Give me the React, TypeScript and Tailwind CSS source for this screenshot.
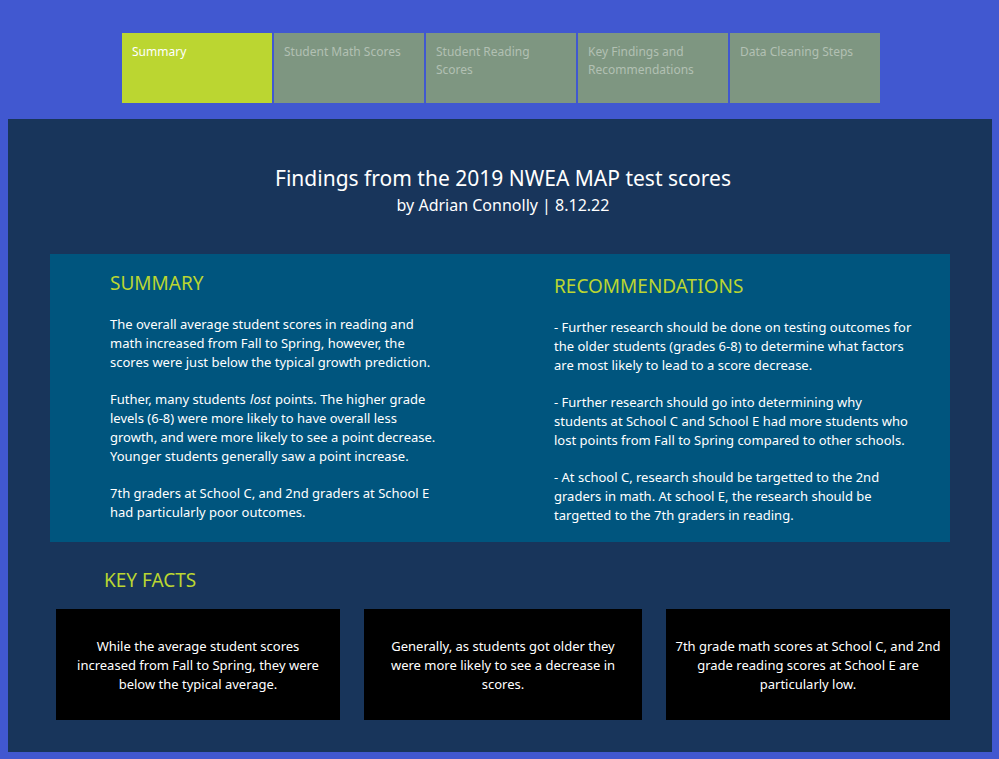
import { useState } from "react";

const tabs = [
  "Summary",
  "Student Math Scores",
  "Student Reading Scores",
  "Key Findings and Recommendations",
  "Data Cleaning Steps",
];

export default function App() {
  const [active, setActive] = useState(0);
  return (
    <div className="min-h-screen bg-[#4158d0] pt-[33px] pr-[7px] pb-[7px] pl-2 font-['Noto_Sans',sans-serif] text-[13px] leading-[19px] text-white">
      <nav className="mx-auto grid max-w-[760px] grid-cols-5 gap-[2px] pl-[2px]">
        {tabs.map((tab, i) => (
          <button
            key={tab}
            type="button"
            onClick={() => setActive(i)}
            className={`flex h-[70px] items-start px-[10px] pt-[10px] text-left text-[12px] leading-[18px] ${
              i === active ? "bg-[#bbd631] text-white" : "bg-[#7e9681] text-[#b2c0b3]"
            }`}
          >
            {tab}
          </button>
        ))}
      </nav>

      <main className="mt-4 bg-[#18355b] px-[42px] pt-[44px] pb-8">
        <header className="pl-[6px] text-center">
          <h1 className="text-[21px] leading-[30px]">Findings from the 2019 NWEA MAP test scores</h1>
          <p className="text-[16px] leading-[24px]">by Adrian Connolly | 8.12.22</p>
        </header>

        <div className="mt-[37px] grid grid-cols-2 bg-[#00557e] pb-[17px]">
          <section className="pt-4 pl-[60px]">
            <h2 className="text-[19px] leading-[26px] text-[#bbd631]">SUMMARY</h2>
            <div className="mt-[19px] max-w-[335px] space-y-[18px]">
              <p>The overall average student scores in reading and math increased from Fall to Spring, however, the scores were just below the typical growth prediction.</p>
              <p>Futher, many students <em className="mx-px">lost</em> points. The higher grade levels (6-8) were more likely to have overall less growth, and were more likely to see a point decrease. Younger students generally saw a point increase.</p>
              <p>7th graders at School C, and 2nd graders at School E had particularly poor outcomes.</p>
            </div>
          </section>
          <section className="pt-[19px] pl-[54px]">
            <h2 className="text-[19px] leading-[26px] text-[#bbd631]">RECOMMENDATIONS</h2>
            <div className="mt-[19px] max-w-[360px] space-y-[18px]">
              <p>- Further research should be done on testing outcomes for the older students (grades 6-8) to determine what factors are most likely to lead to a score decrease.</p>
              <p>- Further research should go into determining why students at School C and School E had more students who lost points from Fall to Spring compared to other schools.</p>
              <p>- At school C, research should be targetted to the 2nd graders in math. At school E, the research should be targetted to the 7th graders in reading.</p>
            </div>
          </section>
        </div>

        <section className="pt-[25px]">
          <h2 className="pl-[54px] text-[19px] leading-[26px] text-[#bbd631]">KEY FACTS</h2>
          <div className="mt-4 grid grid-cols-[284fr_278fr_284fr] gap-6 pl-[6px] text-center">
            <p className="flex h-[111px] items-center justify-center bg-black px-5 pt-[2px]">While the average student scores increased from Fall to Spring, they were below the typical average.</p>
            <p className="flex h-[111px] items-center justify-center bg-black px-5 pt-[2px]">Generally, as students got older they were more likely to see a decrease in scores.</p>
            <p className="flex h-[111px] items-center justify-center bg-black px-2 pt-[2px]">7th grade math scores at School C, and 2nd grade reading scores at School E are particularly low.</p>
          </div>
        </section>
      </main>
    </div>
  );
}
